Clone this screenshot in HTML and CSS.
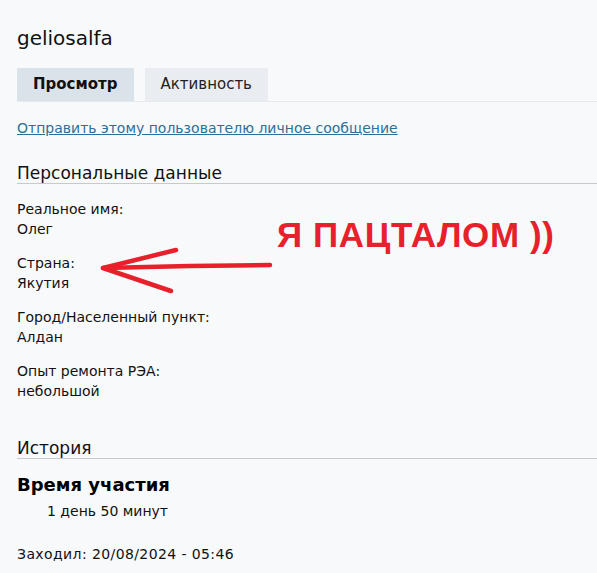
FILE: index.html
```html
<!DOCTYPE html>
<html lang="ru">
<head>
<meta charset="utf-8">
<link rel="stylesheet" href="styles.css">
</head>
<body>
<div class="page">
  <h1 class="user">geliosalfa</h1>
  <div class="tabs">
    <span class="tab active">Просмотр</span>
    <span class="tab">Активность</span>
  </div>
  <a class="pm" href="#">Отправить этому пользователю личное сообщение</a>

  <h2 class="section">Персональные данные</h2>
  <dl class="fields">
    <div class="field"><dt>Реальное имя:</dt><dd>Олег</dd></div>
    <div class="field"><dt>Страна:</dt><dd>Якутия</dd></div>
    <div class="field"><dt>Город/Населенный пункт:</dt><dd>Алдан</dd></div>
    <div class="field"><dt>Опыт ремонта РЭА:</dt><dd>небольшой</dd></div>
  </dl>

  <h2 class="section history">История</h2>
  <h3 class="sub">Время участия</h3>
  <div class="indent">1 день 50 минут</div>
  <div class="visit">Заходил: 20/08/2024 - 05:46</div>

  <div class="note">Я ПАЦТАЛОМ ))</div>
  <svg class="arrow" width="597" height="573" viewBox="0 0 597 573">
    <g fill="none" stroke="#e8202b" stroke-width="4.5" stroke-linecap="round" stroke-linejoin="round">
      <path d="M270 265 L190 266 L103 268"/>
      <path d="M176 250 L103 268 L171 291"/>
    </g>
  </svg>
</div>
</body>
</html>
```
FILE: styles.css
```css
html, body {
  margin: 0;
  padding: 0;
  background: #f8f9fb;
}
.page {
  position: relative;
  width: 597px;
  height: 573px;
  overflow: hidden;
  padding: 0 0 0 17px;
  box-sizing: border-box;
  font-family: "DejaVu Sans", Verdana, sans-serif;
  font-size: 14px;
  color: #111;
}
.user {
  margin: 0;
  padding-top: 25px;
  font-size: 20px;
  font-weight: normal;
  line-height: 26px;
  color: #111;
}
.tabs {
  display: flex;
  gap: 11px;
  margin-top: 17px;
  border-bottom: 1px solid #e6eaee;
}
.tab {
  display: block;
  height: 33px;
  line-height: 33px;
  padding: 0 16px;
  background: #e9edf1;
  font-size: 15px;
  color: #222;
}
.tab.active {
  background: #dbe3ea;
  font-weight: bold;
  color: #111;
}
.pm {
  display: block;
  margin-top: 17px;
  color: #2f6f95;
  text-decoration: underline;
  line-height: 18px;
}
.section {
  margin: 26px 0 0;
  font-size: 17px;
  font-weight: normal;
  line-height: 20px;
  border-bottom: 1px solid #c8c9cb;
  color: #111;
}
.fields {
  margin: 15px 0 0;
  display: flex;
  flex-direction: column;
  gap: 14px;
}
.field dt, .field dd {
  margin: 0;
  line-height: 20px;
}
.history {
  margin-top: 37px;
}
.sub {
  margin: 15px 0 0;
  font-size: 18px;
  line-height: 22px;
  font-weight: bold;
  color: #000;
}
.indent {
  margin-top: 5px;
  padding-left: 30px;
  line-height: 20px;
}
.visit {
  margin-top: 23px;
  line-height: 20px;
  letter-spacing: 0.4px;
}
.note {
  position: absolute;
  left: 277px;
  top: 214px;
  font-family: "Liberation Sans", Arial, sans-serif;
  font-weight: bold;
  font-size: 35px;
  line-height: 42px;
  letter-spacing: 0.6px;
  color: #e8202b;
}
.arrow {
  position: absolute;
  left: 0;
  top: 0;
  pointer-events: none;
}
```
